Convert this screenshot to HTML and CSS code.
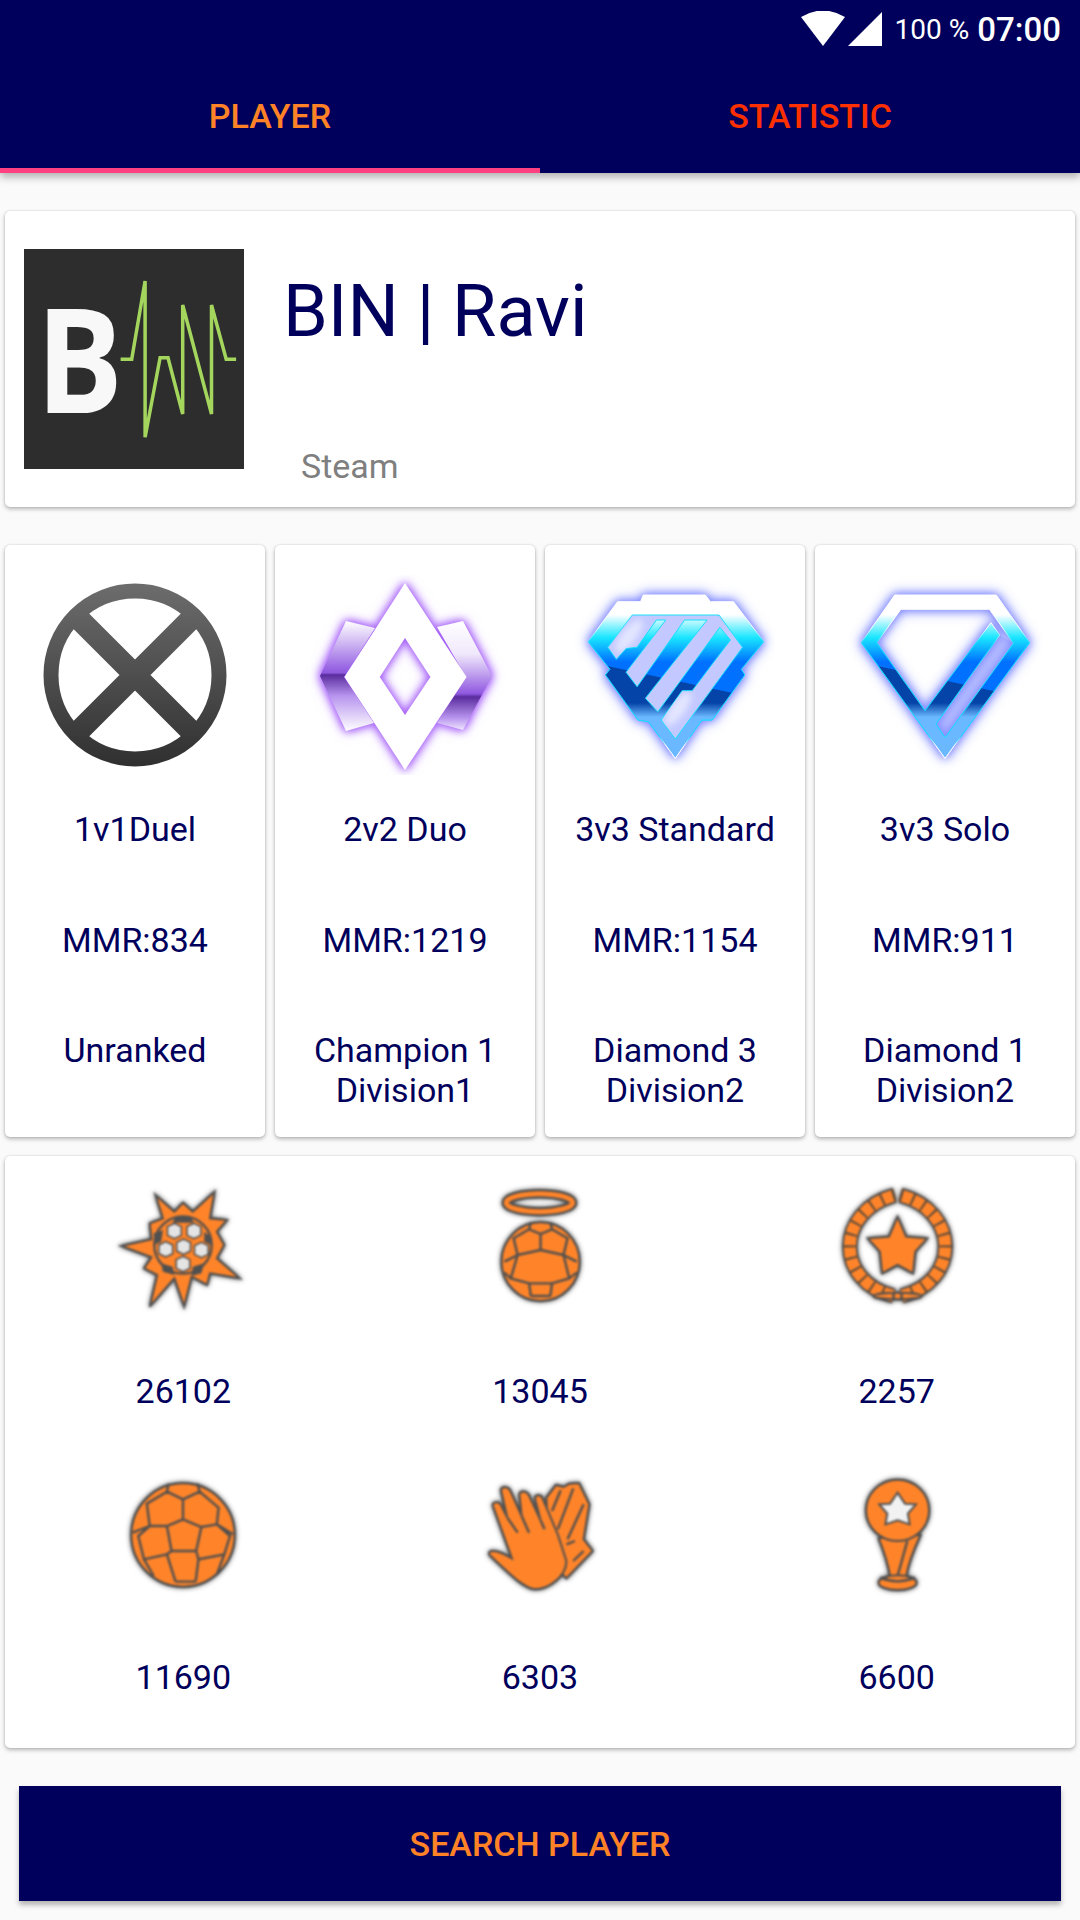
FILE: index.html
```html
<!DOCTYPE html>
<html lang="en">
<head>
<meta charset="utf-8">
<title>Player</title>
<link rel="stylesheet" href="styles.css">
</head>
<body>
<header class="appbar">
  <div class="status">
    <svg class="status-icon" width="86" height="36" viewBox="0 0 86 36">
      <path class="white" d="M3 6 Q25 -7 47 6 L25 35 Z"/>
      <path class="white" d="M50 35 L84 1 V35 Z"/>
    </svg>
    <span class="battery">100 %</span>
    <span class="clock">07:00</span>
  </div>
  <nav class="tabs">
    <div class="tab tab-active">PLAYER</div>
    <div class="tab tab-other">STATISTIC</div>
  </nav>
</header>

<main class="content">
  <section class="card profile">
    <svg class="avatar" width="220" height="220" viewBox="0 0 220 220">
      <rect class="avatar-bg" width="220" height="220"/>
      <text class="avatar-b" x="12" y="164" textLength="87" lengthAdjust="spacingAndGlyphs">B</text>
      <polyline class="avatar-line" points="96.6,110.3 107.7,110.3 121.1,32 121.1,188.3 136.1,108.7 144,108.7 158.7,165 158.7,56 187.5,165 187.5,56 202.2,110.3 212.1,110.3"/>
    </svg>
    <div class="profile-text">
      <h1 class="player-name">BIN | Ravi</h1>
      <p class="platform">Steam</p>
    </div>
  </section>

  <section class="ranks">
    <article class="card rank">
      <svg class="rank-icon unranked" width="200" height="200" viewBox="0 0 200 200">
        <defs>
          <linearGradient id="gray" gradientUnits="userSpaceOnUse" x1="0" y1="10" x2="0" y2="190">
            <stop offset="0" stop-color="#6c6c6c"/>
            <stop offset="1" stop-color="#303030"/>
          </linearGradient>
          <clipPath id="disc"><circle cx="100" cy="100" r="85"/></clipPath>
        </defs>
        <circle cx="100" cy="100" r="84" fill="none" stroke="url(#gray)" stroke-width="15"/>
        <g clip-path="url(#disc)" stroke="url(#gray)" stroke-width="22">
          <path d="M30 30 L170 170 M170 30 L30 170" fill="none"/>
        </g>
      </svg>
      <p class="rank-line rank-title">1v1Duel</p>
      <p class="rank-line">MMR:834</p>
      <p class="rank-line">Unranked</p>
    </article>

    <article class="card rank">
      <svg class="rank-icon" width="200" height="200" viewBox="0 0 200 200">
        <defs>
          <linearGradient id="wing-l" gradientUnits="userSpaceOnUse" x1="0" y1="46" x2="0" y2="156">
            <stop offset="0" stop-color="#ffffff"/>
            <stop offset=".42" stop-color="#9a68e4"/>
            <stop offset=".47" stop-color="#8f5ade"/>
            <stop offset=".49" stop-color="#5a2c9e"/>
            <stop offset=".68" stop-color="#b794ee"/>
            <stop offset="1" stop-color="#ffffff"/>
          </linearGradient>
          <linearGradient id="wing-r" gradientUnits="userSpaceOnUse" x1="0" y1="46" x2="0" y2="156">
            <stop offset="0" stop-color="#ffffff"/>
            <stop offset=".3" stop-color="#f0e8fc"/>
            <stop offset=".66" stop-color="#9058e0"/>
            <stop offset=".69" stop-color="#5a2c9e"/>
            <stop offset=".88" stop-color="#b794ee"/>
            <stop offset="1" stop-color="#f4ecff"/>
          </linearGradient>
        </defs>
        <g class="glow-purple">
          <polygon fill="url(#wing-l)" points="41,46 70,53 39,102 69,148 41,156 15,101"/>
          <polygon fill="url(#wing-r)" points="158,46 132,52 161,102 132,148 158,155 187,101"/>
          <path class="white" fill-rule="evenodd" d="M100 8 L161.6 102 L100 195 L39.4 102 Z M100 63 L74.8 102 L100 140 L125.4 102 Z"/>
        </g>
      </svg>
      <p class="rank-line rank-title">2v2 Duo</p>
      <p class="rank-line">MMR:1219</p>
      <p class="rank-line">Champion 1<br>Division1</p>
    </article>

    <article class="card rank">
      <svg class="rank-icon" width="200" height="200" viewBox="0 0 200 200">
        <defs>
          <linearGradient id="gem" gradientUnits="userSpaceOnUse" x1="0" y1="20" x2="0" y2="184">
            <stop offset=".12" stop-color="#ffffff"/>
            <stop offset=".26" stop-color="#19e6ff"/>
            <stop offset=".41" stop-color="#0070ff"/>
            <stop offset="1" stop-color="#0070ff"/>
          </linearGradient>
          <linearGradient id="gem-dark" gradientUnits="userSpaceOnUse" x1="0" y1="84" x2="0" y2="184">
            <stop offset="0" stop-color="#0444a8"/>
            <stop offset=".44" stop-color="#0444a8"/>
            <stop offset=".58" stop-color="#6ab8ff"/>
            <stop offset="1" stop-color="#6ab8ff"/>
          </linearGradient>
          <linearGradient id="gem-edge" gradientUnits="userSpaceOnUse" x1="0" y1="20" x2="0" y2="184">
            <stop offset=".2" stop-color="#ffffff"/>
            <stop offset=".3" stop-color="#19e6ff"/>
            <stop offset=".86" stop-color="#19d8ff"/>
            <stop offset=".92" stop-color="#ffffff"/>
          </linearGradient>
          <clipPath id="slant"><polygon points="0,84 200,127 200,200 0,200"/></clipPath>
          <clipPath id="d3-hole"><polygon points="57.3,40 144,40 167.5,72.3 100.3,164 86.2,145 107.2,115.7 117.2,115.7 155.4,65 144.8,52.3 82.8,136.7 70.4,123.3 132,45 109.6,45 62.1,111.7 51.1,97.3 90.7,45 81.4,45 62.1,72.3 51.1,73.3 41.4,84.3 32.8,72.3"/></clipPath>
          <polygon id="d3-shape" points="68.3,20 130.3,20 135.5,26.7 158.5,26.7 188.8,66.7 166.4,94.3 169.9,100 137.2,145 126.8,145 100.3,183.3 73.5,146.7 63,145 30.4,100 34.9,94.3 13.2,66.7 42.5,26.7 65.5,26.7"/>
          <path id="d1-shape" fill-rule="evenodd" d="M49.7 20 H151.3 L184.7 67.7 L100 183.3 L16.3 67.7 Z M55.9 34.3 L31.8 67.7 L80 135.7 L146 47.7 L154.7 60 L91 149 L100 162.7 L168.5 68.3 L144.4 34.3 Z"/>
        </defs>
        <g class="glow-blue">
          <use href="#d3-shape" fill="url(#gem)" stroke="url(#gem-edge)" stroke-width="1"/>
        </g>
        <g clip-path="url(#slant)">
          <use href="#d3-shape" fill="url(#gem-dark)" stroke="url(#gem-edge)" stroke-width="1"/>
        </g>
        <polygon class="gem-hole" points="57.3,40 144,40 167.5,72.3 100.3,164 86.2,145 107.2,115.7 117.2,115.7 155.4,65 144.8,52.3 82.8,136.7 70.4,123.3 132,45 109.6,45 62.1,111.7 51.1,97.3 90.7,45 81.4,45 62.1,72.3 51.1,73.3 41.4,84.3 32.8,72.3"/>
        <g clip-path="url(#d3-hole)">
          <ellipse class="gem-soft" cx="54" cy="61" rx="20" ry="7" transform="rotate(-52 54 61)"/>
          <ellipse class="gem-soft" cx="103" cy="134" rx="20" ry="7" transform="rotate(-54 103 134)"/>
        </g>
      </svg>
      <p class="rank-line rank-title">3v3 Standard</p>
      <p class="rank-line">MMR:1154</p>
      <p class="rank-line">Diamond 3<br>Division2</p>
    </article>

    <article class="card rank">
      <svg class="rank-icon" width="200" height="200" viewBox="0 0 200 200">
        <polygon class="gem-strip" points="154.7,60 168.5,68.3 100,162.7 91,149"/>
        <g class="glow-blue">
          <use href="#d1-shape" fill="url(#gem)" stroke="url(#gem-edge)" stroke-width="1"/>
        </g>
        <g clip-path="url(#slant)">
          <use href="#d1-shape" fill="url(#gem-dark)" stroke="url(#gem-edge)" stroke-width="1"/>
        </g>
      </svg>
      <p class="rank-line rank-title">3v3 Solo</p>
      <p class="rank-line">MMR:911</p>
      <p class="rank-line">Diamond 1<br>Division2</p>
    </article>
  </section>

  <section class="card stats">
    <div class="stat">
      <svg class="medal" width="140" height="140" viewBox="41 30 244 420" preserveAspectRatio="none">
        <defs>
          <polygon id="hex" points="-12,-13 0,-23 12,-13 12,13 0,23 -12,13"/>
        </defs>
        <polygon class="m-fill" points="55,228 108,208 105,160 128,145 115,75 148,125 163,98 180,125 218,65 210,145 240,150 222,185 235,225 222,265 262,325 210,310 205,345 178,320 165,410 148,325 105,410 118,315 95,295 108,262"/>
        <ellipse class="m-lines" cx="163" cy="225" rx="50" ry="86"/>
        <path class="m-dark" d="M150 140 H176 L182 158 H145 Z M112 190 L128 180 L125 215 L113 225 Z M200 185 L214 205 L212 225 L200 215 Z M125 280 L145 290 L148 315 L128 305 Z M180 290 L200 280 L195 310 L178 318 Z"/>
        <use class="m-hex" href="#hex" x="148" y="183"/>
        <use class="m-hex" href="#hex" x="182" y="183"/>
        <use class="m-hex" href="#hex" x="133" y="238"/>
        <use class="m-hex" href="#hex" x="164" y="230"/>
        <use class="m-hex" href="#hex" x="195" y="240"/>
        <use class="m-hex" href="#hex" x="163" y="282"/>
      </svg>
      <span class="stat-value">26102</span>
    </div>
    <div class="stat">
      <svg class="medal" width="140" height="140" viewBox="662 30 244 420" preserveAspectRatio="none">
        <ellipse class="m-ring-dark" cx="783" cy="98" rx="58" ry="27"/>
        <ellipse class="m-ring" cx="783" cy="98" rx="58" ry="27"/>
        <ellipse class="m-fill" cx="785" cy="275" rx="68" ry="118"/>
        <path class="m-lines" d="M768 158 L765 178 L785 192 L805 178 L802 158 M765 178 L738 205 L745 255 L722 275 M805 178 L832 205 L825 255 L848 275 M785 192 V240 L745 255 M785 240 L825 255 M745 255 L733 325 L765 340 L805 340 L835 325 L825 255 M765 340 L768 378 M805 340 L802 378 M768 378 H802 M733 325 L722 308 M835 325 L848 308"/>
      </svg>
      <span class="stat-value">13045</span>
    </div>
    <div class="stat">
      <svg class="medal" width="140" height="140" viewBox="1282 30 244 420" preserveAspectRatio="none">
        <path class="m-wreath-dark" d="M1400 76 C1296 125 1296 335 1398 378"/>
        <path class="m-wreath-dark" d="M1410 76 C1514 125 1514 335 1412 378"/>
        <path class="m-wreath" d="M1400 76 C1296 125 1296 335 1398 378"/>
        <path class="m-wreath" d="M1410 76 C1514 125 1514 335 1412 378"/>
        <path class="m-wreath-cut" d="M1400 76 C1296 125 1296 335 1398 378"/>
        <path class="m-wreath-cut" d="M1410 76 C1514 125 1514 335 1412 378"/>
        <polygon class="m-fill" points="1405,140 1420,200 1457,205 1436,245 1432,310 1405,285 1378,310 1374,245 1353,205 1390,200"/>
        <ellipse class="m-fill" cx="1405" cy="378" rx="42" ry="10"/>
        <path class="m-lines" d="M1398 370 V388 M1412 370 V388"/>
      </svg>
      <span class="stat-value">2257</span>
    </div>
    <div class="stat">
      <svg class="medal" width="140" height="140" viewBox="41 12 244 420" preserveAspectRatio="none">
        <ellipse class="m-fill" cx="163" cy="222" rx="90" ry="155"/>
        <path class="m-lines" d="M138 68 L135 92 L163 115 L192 92 L188 68 M135 92 L100 128 L105 195 L75 215 M192 92 L225 140 L222 190 L250 220 M163 115 V175 L135 195 L105 195 M163 175 L195 198 L222 190 M135 195 L143 270 H186 L195 198 M105 195 L85 225 L95 295 L135 280 L150 362 M222 190 L245 225 L235 280 L190 295 L185 362 M150 362 H185 M143 270 L135 280 M186 270 L190 295 M95 295 L112 345 M235 280 L222 340"/>
      </svg>
      <span class="stat-value">11690</span>
    </div>
    <div class="stat">
      <svg class="medal" width="140" height="140" viewBox="662 12 244 420" preserveAspectRatio="none">
        <path class="m-fill" d="M795 110 L812 72 L825 78 L835 68 L852 66 L870 130 L860 235 L876 270 L830 352 L800 300 Z"/>
        <path class="m-lines" d="M820 88 L805 150 M842 82 L815 205 M860 130 L832 235 M830 250 L845 240 M842 300 L860 270"/>
        <path class="m-fill" d="M775 385 C755 380 735 345 696 282 C692 266 706 262 735 292 L702 135 C700 122 712 120 716 132 L727 170 L716 88 C716 76 728 76 732 88 L752 165 L748 100 C750 88 760 90 764 100 L785 178 L775 112 C776 100 785 100 788 110 L815 220 L830 300 C830 345 800 385 775 385 Z"/>
        <path class="m-lines" d="M727 170 L745 215 M752 165 L765 215 M785 178 L792 205"/>
      </svg>
      <span class="stat-value">6303</span>
    </div>
    <div class="stat">
      <svg class="medal" width="140" height="140" viewBox="1282 12 244 420" preserveAspectRatio="none">
        <path class="m-fill" d="M1372 232 Q1388 300 1392 348 H1420 Q1424 300 1445 222 Z"/>
        <ellipse class="m-fill" cx="1405" cy="148" rx="55" ry="92"/>
        <ellipse class="m-fill" cx="1405" cy="365" rx="33" ry="22"/>
        <polygon class="m-star" points="1405,95 1418,128 1437,130 1423,158 1426,190 1405,178 1384,190 1387,158 1373,130 1392,128"/>
        <path class="m-lines" d="M1422 240 L1405 345 M1375 350 Q1405 372 1435 350"/>
      </svg>
      <span class="stat-value">6600</span>
    </div>
  </section>

  <button class="search" type="button">SEARCH PLAYER</button>
</main>
</body>
</html>
```

FILE: styles.css
```css
* { box-sizing: border-box; }

html, body {
  margin: 0;
  height: 1920px;
  overflow: hidden;
}

body {
  background: #fafafa;
  color: #00005c;
  font-family: Roboto, "Noto Sans", sans-serif;
}

p, h1 { margin: 0; font-weight: 400; }

.white { fill: #ffffff; }

/* App bar */
.appbar {
  height: 173px;
  background: #00005c;
  box-shadow: 0 4px 8px rgba(0, 0, 0, .3);
  position: relative;
}

.status {
  height: 60px;
  padding: 0 19px 2px 0;
  display: flex;
  justify-content: flex-end;
  align-items: center;
  color: #ffffff;
}

.status-icon { margin-right: 11px; }
.battery { font-size: 28px; font-weight: 400; margin-right: 8px; }
.clock { font-size: 33px; font-weight: 500; }

.tabs { display: flex; height: 113px; }

.tab {
  flex: 1;
  display: flex;
  align-items: center;
  justify-content: center;
  padding-bottom: 2px;
  font-size: 34px;
  font-weight: 500;
}

.tab-active { color: #ff8326; box-shadow: inset 0 -5px 0 #ff4081; }
.tab-other { color: #ff3000; }

/* Cards */
.content { padding: 38px 5px 0; }

.card {
  background: #ffffff;
  border-radius: 5px;
  box-shadow: 0 2px 4px rgba(0, 0, 0, .28), 0 0 2px rgba(0, 0, 0, .14);
}

.profile {
  height: 296px;
  padding: 38px 19px;
  display: flex;
  gap: 39px;
}

.avatar { flex: none; display: block; }
.avatar-bg { fill: #2d2d2d; }
.avatar-b {
  fill: #f8f8f8;
  font-family: "Open Sans", sans-serif;
  font-weight: 700;
  font-size: 146px;
}
.avatar-line {
  fill: none;
  stroke: #a4d65e;
  stroke-width: 3.5;
}

.profile-text {
  display: flex;
  flex-direction: column;
  justify-content: space-between;
}

.player-name {
  font-size: 72px;
  line-height: 84px;
  margin-top: 21px;
}

.platform {
  font-size: 34px;
  line-height: 40px;
  color: #7f7f7f;
  margin: 0 0 -17px 18px;
}

/* Ranks */
.ranks {
  display: grid;
  grid-template-columns: repeat(4, 260px);
  gap: 10px;
  margin-top: 38px;
}

.rank {
  height: 592px;
  padding-top: 30px;
  display: flex;
  flex-direction: column;
  align-items: center;
  gap: 70px;
  text-align: center;
}

.rank-icon { display: block; margin-bottom: -36px; flex: none; }
.rank-title { margin-bottom: 1px; }
.unranked { filter: blur(.4px); }

.rank-line { font-size: 34px; line-height: 40px; }

.glow-purple { filter: drop-shadow(0 0 4px #a45cf5) drop-shadow(0 0 5px #b57cff); }
.glow-blue { filter: drop-shadow(0 0 4px #7f88ff) drop-shadow(0 0 6px #98a0ff); }
.gem-hole { fill: #c3c9ff; stroke: #19e0ff; stroke-width: 1; }
.gem-strip { fill: #bfc6ff; }
.gem-soft { fill: #e4e6ff; filter: blur(3px); }

/* Stats */
.stats {
  margin-top: 19px;
  height: 592px;
  padding-top: 24px;
  display: grid;
  grid-template-columns: repeat(3, 1fr);
  grid-auto-rows: 285px;
}

.stat {
  display: flex;
  flex-direction: column;
  align-items: center;
  gap: 51px;
}

.stat:nth-child(n+4) { gap: 52px; }

.medal {
  display: block;
  filter: blur(.8px) drop-shadow(0 0 2.5px #444444);
}

.medal * { vector-effect: non-scaling-stroke; }

.m-fill { fill: #ff8429; stroke: #505050; stroke-width: 2; }
.m-dark { fill: #505050; }
.m-hex { fill: #e4e4e4; stroke: #4a4a4a; stroke-width: 1.5; }
.m-lines { fill: none; stroke: #4f4f4f; stroke-width: 2.4; }
.m-ring-dark { fill: none; stroke: #505050; stroke-width: 9; }
.m-ring { fill: none; stroke: #ff8429; stroke-width: 5; }
.m-wreath-dark { fill: none; stroke: #505050; stroke-width: 15; }
.m-wreath { fill: none; stroke: #ff8429; stroke-width: 12; }
.m-wreath-cut {
  fill: none;
  stroke: #5a4a3a;
  stroke-width: 12;
  stroke-dasharray: 2 10;
}
.m-star { fill: #f2f2f2; stroke: #505050; stroke-width: 2; }

.stat-value { font-size: 34px; line-height: 40px; }

/* Button */
.search {
  display: block;
  width: 1042px;
  height: 115px;
  margin: 38px auto 0;
  border: 0;
  background: #00005c;
  color: #ff8326;
  font-family: Roboto, "Noto Sans", sans-serif;
  font-size: 34px;
  font-weight: 500;
  box-shadow: 0 4px 5px rgba(0, 0, 0, .28);
}
```
